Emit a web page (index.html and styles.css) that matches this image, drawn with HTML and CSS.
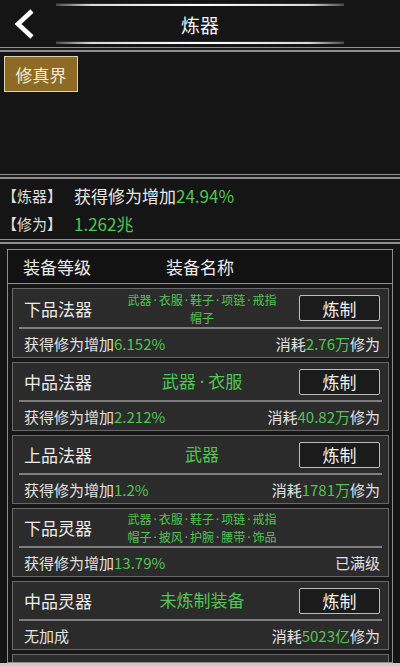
FILE: index.html
```html
<!DOCTYPE html>
<html lang="zh-CN">
<head>
<meta charset="utf-8">
<title>炼器</title>
<link rel="stylesheet" href="styles.css">
</head>
<body>
<div class="page">
  <header class="topbar">
    <div class="deco"></div>
    <div class="bar-row">
      <svg class="back" width="24" height="32" viewBox="0 0 24 32"><path d="M19 3 L5 16 L19 29" fill="none" stroke="#fff" stroke-width="4.6"/></svg>
      <h1 class="title">炼器</h1>
      <span></span>
    </div>
    <div class="deco"></div>
  </header>
  <div class="sep"></div>
  <section class="realm">
    <div class="realm-btn">修真界</div>
  </section>
  <div class="sep"></div>
  <section class="info">
    <div class="info-row"><span class="label">【炼器】</span><span class="value">获得修为增加<em class="g">24.94%</em></span></div>
    <div class="info-row"><span class="label">【修为】</span><span class="value"><em class="g">1.262兆</em></span></div>
  </section>
  <div class="sep"></div>
  <section class="list">
    <div class="list-head"><span class="col1">装备等级</span><span class="col2">装备名称</span></div>
    <div class="cards">
      <div class="card">
        <div class="card-top tall">
          <span class="grade">下品法器</span>
          <span class="items small">武器<span class="dot">·</span>衣服<span class="dot">·</span>鞋子<span class="dot">·</span>项链<span class="dot">·</span>戒指<br>帽子</span>
          <span class="act"><button class="btn">炼制</button></span>
        </div>
        <div class="divider"></div>
        <div class="card-bottom"><span>获得修为增加<em class="g">6.152%</em></span><span>消耗<em class="g">2.76万</em>修为</span></div>
      </div>
      <div class="card">
        <div class="card-top">
          <span class="grade">中品法器</span>
          <span class="items">武器<span class="dot big">·</span>衣服</span>
          <span class="act"><button class="btn">炼制</button></span>
        </div>
        <div class="divider"></div>
        <div class="card-bottom"><span>获得修为增加<em class="g">2.212%</em></span><span>消耗<em class="g">40.82万</em>修为</span></div>
      </div>
      <div class="card">
        <div class="card-top">
          <span class="grade">上品法器</span>
          <span class="items">武器</span>
          <span class="act"><button class="btn">炼制</button></span>
        </div>
        <div class="divider"></div>
        <div class="card-bottom"><span>获得修为增加<em class="g">1.2%</em></span><span>消耗<em class="g">1781万</em>修为</span></div>
      </div>
      <div class="card">
        <div class="card-top">
          <span class="grade">下品灵器</span>
          <span class="items small">武器<span class="dot">·</span>衣服<span class="dot">·</span>鞋子<span class="dot">·</span>项链<span class="dot">·</span>戒指<br>帽子<span class="dot">·</span>披风<span class="dot">·</span>护腕<span class="dot">·</span>腰带<span class="dot">·</span>饰品</span>
          <span class="act"></span>
        </div>
        <div class="divider"></div>
        <div class="card-bottom"><span>获得修为增加<em class="g">13.79%</em></span><span>已满级</span></div>
      </div>
      <div class="card">
        <div class="card-top">
          <span class="grade">中品灵器</span>
          <span class="items">未炼制装备</span>
          <span class="act"><button class="btn">炼制</button></span>
        </div>
        <div class="divider"></div>
        <div class="card-bottom"><span>无加成</span><span>消耗<em class="g">5023亿</em>修为</span></div>
      </div>
      <div class="card empty"></div>
    </div>
  </section>
  <div class="page-edge"></div>
</div>
</body>
</html>
```

FILE: styles.css
```css
* { box-sizing: border-box; }
html, body {
  margin: 0;
  padding: 0;
  background: #151515;
}
body {
  font-family: "Noto Sans CJK SC", "Noto Sans", sans-serif;
  color: #e6e6e6;
}
.page {
  width: 400px;
  height: 666px;
  overflow: hidden;
  display: flex;
  flex-direction: column;
  background: #151515;
}
em { font-style: normal; }
.g { color: #52c552; }

/* top bar */
.topbar {
  height: 47px;
  padding-top: 4px;
  display: flex;
  flex-direction: column;
  flex-shrink: 0;
}
.deco {
  height: 2px;
  margin: 0 56px;
  background: linear-gradient(90deg, #4a4a4a 0%, #d8d8d8 12%, #ffffff 50%, #d8d8d8 88%, #4a4a4a 100%);
  box-shadow: 0 -1px 0 #2e2e2e;
}
.bar-row {
  height: 36px;
  display: grid;
  grid-template-columns: 1fr auto 1fr;
  align-items: center;
}
.back {
  display: block;
  margin-left: 13px;
}
.title {
  margin: 0;
  font-size: 19px;
  font-weight: normal;
  color: #f2f2f2;
  line-height: 1;
}

.sep {
  height: 5px;
  flex-shrink: 0;
  border-top: 1px solid #8e8e8e;
  border-bottom: 2px solid #8e8e8e;
  background: #1a1a1a;
}

/* realm */
.realm {
  height: 122px;
  flex-shrink: 0;
  padding: 4px 0 0 4px;
}
.realm-btn {
  width: 74px;
  height: 36px;
  display: flex;
  align-items: center;
  justify-content: center;
  background: #8d6b25;
  border: 1px solid #dcd2ae;
  color: #f4ecd2;
  font-size: 17px;
}

/* info */
.info {
  height: 60px;
  flex-shrink: 0;
  padding-top: 2px;
}
.info-row {
  height: 28px;
  display: flex;
  align-items: center;
}
.label {
  width: 74px;
  padding-left: 2px;
  font-size: 15px;
  color: #dedede;
}
.value {
  font-size: 17px;
  color: #e8e8e8;
}

/* list */
.list {
  margin: 5px 7px 0;
  height: 414px;
  flex-shrink: 0;
  border: 1px solid #8f8f8f;
  overflow: hidden;
  background: #171717;
}
.list-head {
  height: 34px;
  border-bottom: 1px solid #8f8f8f;
  display: flex;
  align-items: center;
  font-size: 17px;
  color: #ececec;
  background: #121212;
}
.col1 {
  width: 158px;
  padding-left: 15px;
}
.cards {
  padding: 4px 3px 0 4px;
  display: flex;
  flex-direction: column;
  gap: 4px;
}
.card {
  border: 1px solid #686868;
  background: #2b2b2b;
}
.card.empty { height: 69px; }
.card-top {
  height: 37px;
  display: grid;
  grid-template-columns: 1fr auto 1fr;
  align-items: center;
  padding: 0 8px 0 11px;
}
.card-top.tall { height: 38px; }
.grade {
  font-size: 17px;
  color: #ececec;
}
.items {
  color: #52c552;
  font-size: 17px;
  text-align: center;
  line-height: 1.2;
}
.items.small {
  font-size: 12px;
  line-height: 17px;
}
.dot {
  font-family: "Noto Sans", "DejaVu Sans", sans-serif;
  margin: 0 2px;
}
.dot.big { margin: 0 4px; }
.act {
  display: flex;
  justify-content: flex-end;
}
.btn {
  width: 81px;
  height: 26px;
  padding: 0;
  background: #1b1b1b;
  border: 1px solid #bdbdbd;
  border-radius: 2px;
  color: #f0f0f0;
  font-family: "Noto Sans CJK SC", "Noto Sans", sans-serif;
  font-size: 17px;
  line-height: 1;
}
.divider {
  height: 2px;
  margin: 0 6px;
  background: #7e7e7e;
}
.card-bottom {
  height: 28px;
  display: flex;
  align-items: center;
  justify-content: space-between;
  padding: 0 8px 0 11px;
  font-size: 15px;
  color: #e2e2e2;
}

.page-edge {
  height: 3px;
  flex-shrink: 0;
  background: #c9c9c9;
}
```
